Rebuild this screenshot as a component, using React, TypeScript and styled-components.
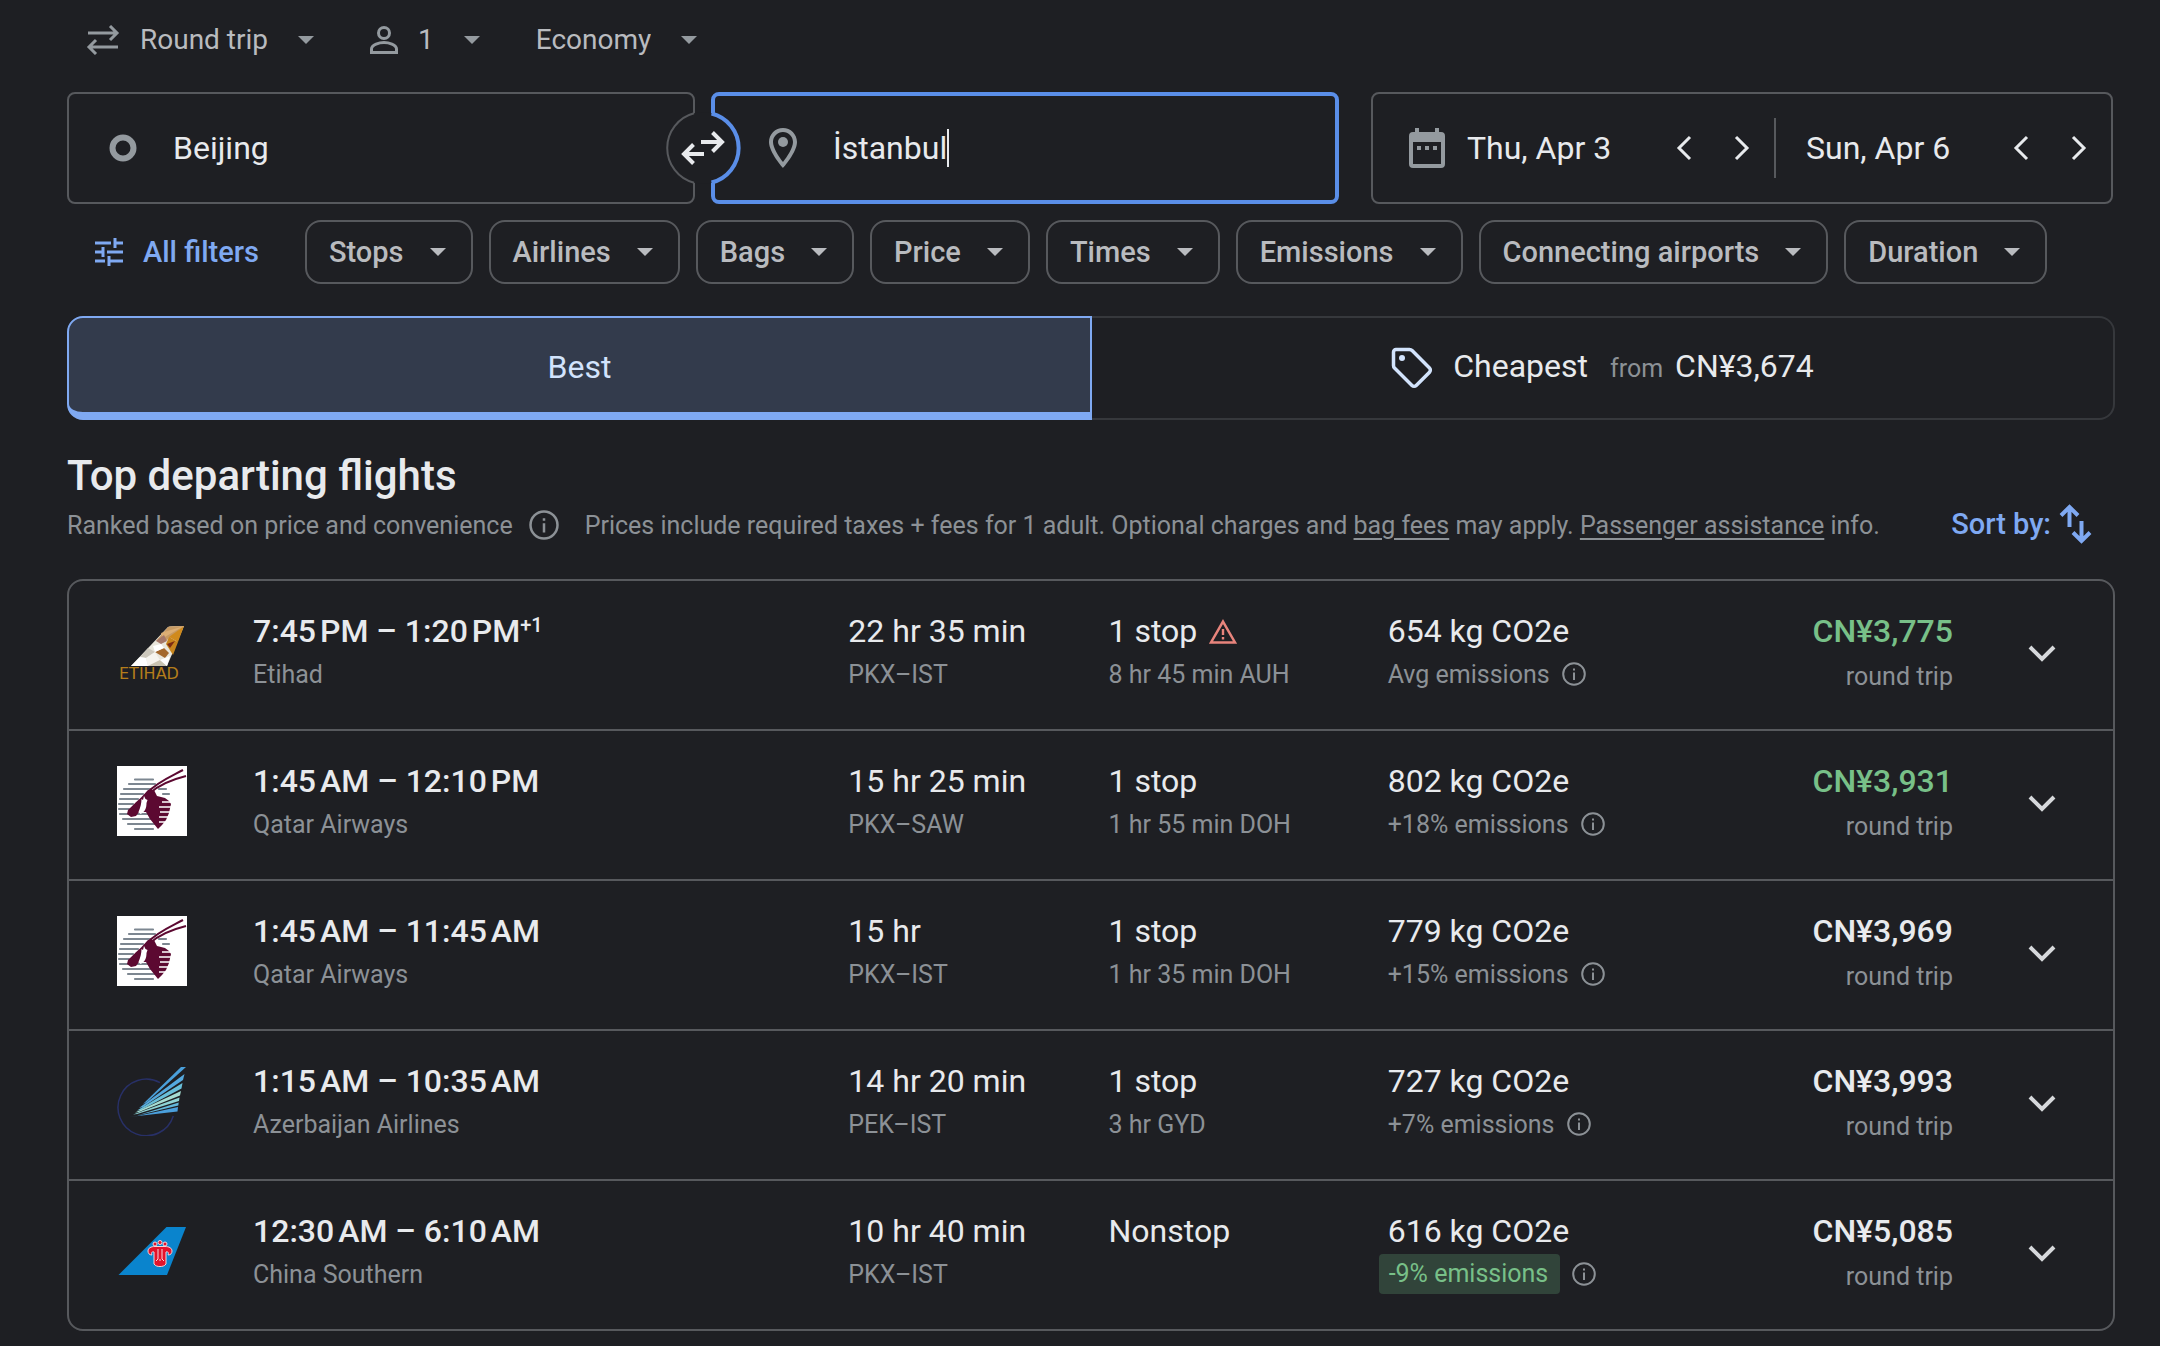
import React from "react";
import styled, { createGlobalStyle } from "styled-components";

const c = {
  bg: "#1e1f23",
  text: "#e8eaed",
  soft: "#b9bbbf",
  muted: "#8c9196",
  icon: "#949a9f",
  line: "#57595d",
  faint: "#36383c",
  blue: "#7fa9f2",
  focus: "#5a8ee8",
  green: "#78c088",
  red: "#e8847c",
};

const GlobalStyle = createGlobalStyle`
  *, *::before, *::after { box-sizing: border-box; }
  html { background: ${c.bg}; }
  body { margin: 0; color: ${c.text}; font-family: Roboto, "Liberation Sans", sans-serif; font-size: 24px; }
  button, input, select { font: inherit; color: inherit; background: none; border: 0; padding: 0; margin: 0; outline: none; }
  button { cursor: pointer; }
  h1, ul, p { margin: 0; padding: 0; }
  ul { list-style: none; }
  svg { display: block; flex: none; }
`;

const Page = styled.main`
  padding: 0 45px 16px 67px;
`;

/* ---------- trip options ---------- */

const Options = styled.div`
  display: flex;
  align-items: center;
  height: 80px;
  padding-left: 19px;
  margin-bottom: 12px;
  gap: 56px;
  font-size: 28px;
  color: ${c.soft};
`;

const Option = styled.label`
  display: flex;
  align-items: center;
  gap: 20px;
  color: ${c.icon};
`;

const Select = styled.select`
  appearance: none;
  field-sizing: content;
  color: ${c.soft};
  padding: 0 10px 2px 0;
`;

const CaretDown = ({ color = c.soft }: { color?: string }) => (
  <svg width="16" height="8" viewBox="0 0 16 8" aria-hidden="true">
    <path d="M0 0h16L8 8z" fill={color} />
  </svg>
);

/* ---------- search fields ---------- */

const Search = styled.form`
  display: grid;
  grid-template-columns: minmax(0, 1272fr) minmax(0, 742fr);
  gap: 32px;
  margin-right: 2px;
`;

const Places = styled.div`
  position: relative;
  display: grid;
  grid-template-columns: 1fr 1fr;
  gap: 16px;
`;

const Field = styled.label<{ $focused?: boolean }>`
  display: flex;
  align-items: center;
  height: 112px;
  padding-left: ${(p) => (p.$focused ? 54 : 40)}px;
  gap: 36px;
  border: ${(p) => (p.$focused ? `4px solid ${c.focus}` : `2px solid ${c.line}`)};
  border-radius: 8px;
  font-size: 32px;
`;

const PlaceInput = styled.input`
  field-sizing: content;
  height: 48px;
  caret-color: transparent;
`;

const Typed = styled.span`
  display: flex;
  align-items: center;
`;

const TextCursor = styled.span`
  width: 2px;
  height: 38px;
  background: ${c.text};
`;

const Swap = styled.button`
  position: absolute;
  left: 50%;
  top: 50%;
  transform: translate(-50%, -50%);
`;

const Dates = styled.div`
  display: grid;
  grid-template-columns: minmax(0, 401fr) minmax(0, 337fr);
  align-items: center;
  border: 2px solid ${c.line};
  border-radius: 8px;
  font-size: 32px;
`;

const DateCell = styled.div<{ $divided?: boolean }>`
  display: flex;
  align-items: center;
  height: 60px;
  padding: 0 12px 0 ${(p) => (p.$divided ? 30 : 36)}px;
  border-left: ${(p) => (p.$divided ? `2px solid ${c.line}` : "0")};
`;

const DateLabel = styled.label`
  display: flex;
  flex: 1;
  min-width: 0;
  align-items: center;
  gap: 22px;
`;

const DateInput = styled.input`
  flex: 1;
  width: 100%;
  min-width: 0;
`;

const Step = styled.button`
  display: grid;
  place-items: center;
  width: 40px;
  height: 48px;
  & + & {
    margin-left: 18px;
  }
`;

/* ---------- filters ---------- */

const Filters = styled.div`
  display: flex;
  gap: 16px;
  margin-top: 16px;
  font-size: 29px;
  font-weight: 500;
  white-space: nowrap;
`;

const AllFilters = styled.button`
  display: flex;
  align-items: center;
  gap: 20px;
  padding: 0 30px 0 28px;
  color: ${c.blue};
`;

const Chip = styled.button`
  display: flex;
  align-items: center;
  gap: 26px;
  height: 64px;
  padding: 0 25px 0 22px;
  border: 2px solid ${c.line};
  border-radius: 16px;
  color: ${c.soft};
`;

/* ---------- tabs ---------- */

const Tabs = styled.div`
  display: grid;
  grid-template-columns: 1025fr 1023fr;
  margin-top: 32px;
`;

const Tab = styled.button<{ $active?: boolean }>`
  display: flex;
  align-items: center;
  justify-content: center;
  gap: 20px;
  height: 104px;
  font-size: 32px;
  border: 2px solid ${(p) => (p.$active ? c.blue : c.faint)};
  ${(p) =>
    p.$active
      ? `border-bottom-width: 8px; padding-top: 4px; border-radius: 16px 0 0 16px; background: #333b4c; color: #d2e3fc;`
      : `border-left: 0; border-radius: 0 16px 16px 0;`}
`;

const TabText = styled.span`
  padding-bottom: 4px;
`;

const From = styled.span`
  margin: 0 12px 0 22px;
  font-size: 25px;
  color: ${c.muted};
`;

/* ---------- heading ---------- */

const Heading = styled.h1`
  margin-top: 32px;
  font-size: 42px;
  line-height: 48px;
  font-weight: 500;
`;

const Meta = styled.div`
  display: flex;
  align-items: center;
  height: 50px;
  color: ${c.muted};
  font-size: 25px;
  white-space: nowrap;
`;

const InfoButton = styled.button<{ $left: number; $right?: number }>`
  margin-left: ${(p) => p.$left}px;
  margin-right: ${(p) => p.$right ?? 0}px;
  color: ${c.muted};
`;

const Link = styled.a`
  color: inherit;
  text-decoration: underline;
  text-underline-offset: 4px;
`;

const SortBy = styled.button`
  display: flex;
  align-items: center;
  gap: 8px;
  margin-left: auto;
  padding: 0 22px 2px 0;
  font-size: 29px;
  font-weight: 500;
  color: ${c.blue};
`;

/* ---------- results ---------- */

const Flights = styled.ul`
  margin-top: 29px;
  border: 2px solid ${c.line};
  border-radius: 16px;
`;

const Flight = styled.li`
  display: grid;
  grid-template-columns: 136px 595fr 260fr 279fr 300fr 265fr 160px;
  height: 150px;
  padding-left: 48px;
  & + & {
    border-top: 2px solid ${c.line};
  }
  &:first-child {
    height: 148px;
  }
`;

const Logo = styled.div`
  padding-top: 35px;
`;

const Cell = styled.div<{ $end?: boolean }>`
  padding-top: 30px;
  text-align: ${(p) => (p.$end ? "right" : "left")};
  white-space: nowrap;
`;

const Main = styled.p<{ $strong?: boolean; $color?: string }>`
  display: flex;
  align-items: center;
  font-size: 32px;
  line-height: 40px;
  font-weight: ${(p) => (p.$strong ? 500 : 400)};
  color: ${(p) => p.$color ?? c.text};
`;

const Price = styled(Main)`
  display: block;
`;

const NextDay = styled.sup`
  align-self: flex-start;
  font-size: 20px;
  line-height: 28px;
`;

const Sub = styled.p`
  display: flex;
  align-items: center;
  height: 40px;
  margin-top: 3px;
  font-size: 25px;
  color: ${c.muted};
`;

const PriceSub = styled(Sub)`
  justify-content: flex-end;
  margin-top: 5px;
`;

const Badge = styled.span`
  margin-left: -9px;
  padding: 0 12px 0 10px;
  line-height: 40px;
  border-radius: 4px;
  background: #31443a;
  color: ${c.green};
`;

const Warn = styled.span`
  margin-left: 12px;
`;

const Expand = styled.button`
  display: grid;
  place-items: center;
  align-self: center;
  justify-self: center;
  width: 56px;
  height: 56px;
  padding-bottom: 4px;
  margin-left: 18px;
`;

/* ---------- icons ---------- */

const RoundTripIcon = () => (
  <svg width="34" height="30" viewBox="0 0 34 30" fill="none" stroke={c.icon} strokeWidth="3" aria-hidden="true">
    <path d="M2 8h29M24 1l7 7-7 7M32 22H3M10 15l-7 7 7 7" />
  </svg>
);

const PersonIcon = () => (
  <svg width="28" height="28" viewBox="0 0 28 28" fill="none" stroke={c.icon} strokeWidth="3" aria-hidden="true">
    <circle cx="14" cy="7" r="5.5" />
    <path d="M1.500 26.500v-3.500c0-4.500 8-6.500 12.500-6.500s12.500 2 12.500 6.500v3.500z" />
  </svg>
);

const SwapArt = () => (
  <svg width="76" height="76" viewBox="0 0 76 76" fill="none" aria-hidden="true">
    <circle cx="38" cy="38" r="36" fill={c.bg} />
    <path d="M29 3.200A36 36 0 0 0 29 72.800" stroke={c.line} strokeWidth="2" />
    <path d="M46.500 3.500A35.500 35.500 0 0 1 46.500 72.500" stroke={c.focus} strokeWidth="4" />
    <path d="M36 32h20M47.500 22.500l9.500 9.500-9.500 9.500M39 44H19M28.500 34.500L19 44l9.500 9.500" stroke={c.text} strokeWidth="4" />
  </svg>
);

const OriginIcon = () => (
  <svg width="28" height="28" viewBox="0 0 28 28" aria-hidden="true">
    <circle cx="14" cy="14" r="10.500" fill="none" stroke={c.icon} strokeWidth="6" />
  </svg>
);

const PinIcon = () => (
  <svg width="28" height="40" viewBox="0 0 28 40" aria-hidden="true">
    <path
      fill={c.icon}
      fillRule="evenodd"
      d="M14 0C6.300 0 0 6.200 0 14c0 10.500 14 26 14 26s14-15.500 14-26C28 6.200 21.700 0 14 0zM4 14C4 8.500 8.500 4 14 4s10 4.500 10 10c0 5.800-5.800 14.700-10 20C9.900 28.800 4 19.700 4 14z"
    />
    <circle cx="14" cy="14" r="5" fill={c.icon} />
  </svg>
);

const CalendarIcon = () => (
  <svg width="36" height="40" viewBox="0 0 36 40" fill={c.icon} aria-hidden="true">
    <path
      fillRule="evenodd"
      d="M6 0h4v4h16V0h4v4h2a4 4 0 0 1 4 4v28a4 4 0 0 1-4 4H4a4 4 0 0 1-4-4V8a4 4 0 0 1 4-4h2zM4 14v22h28V14z"
    />
    <path d="M8 18h4v4H8zM16 18h4v4h-4zM24 18h4v4h-4z" />
  </svg>
);

const ChevronIcon = ({ back }: { back?: boolean }) => (
  <svg width="16" height="26" viewBox="0 0 16 26" fill="none" stroke={c.text} strokeWidth="3" aria-hidden="true">
    <path d={back ? "M14 2L3 13l11 11" : "M2 2l11 11L2 24"} />
  </svg>
);

const TuneIcon = () => (
  <svg width="28" height="28" viewBox="0 0 28 28" fill="none" stroke={c.blue} strokeWidth="3" aria-hidden="true">
    <path d="M0 5h16M20 5h8M20 0v10M0 14h8M12 14h16M8 9v10M0 23h10M14 23h14M14 18v10" />
  </svg>
);

const TagIcon = () => (
  <svg width="42" height="42" viewBox="0 0 42 42" fill="none" aria-hidden="true">
    <path
      d="M2.500 5A2.500 2.500 0 0 1 5 2.500h13.500c1 0 2 .4 2.600 1L38.500 21a3 3 0 0 1 0 4.200L25.200 38.500a3 3 0 0 1-4.200 0L3.500 21c-.6-.6-1-1.500-1-2.500z"
      stroke="#d2e3fc"
      strokeWidth="3.500"
    />
    <circle cx="11" cy="11" r="3" fill="#d2e3fc" />
  </svg>
);

const InfoIcon = ({ size }: { size: number }) => (
  <svg width={size} height={size} viewBox="0 0 24 24" aria-hidden="true">
    <circle cx="12" cy="12" r="10.800" fill="none" stroke="currentColor" strokeWidth="2" />
    <path d="M11 10.500h2V18h-2zM11 6.500h2v2h-2z" fill="currentColor" />
  </svg>
);

const SortIcon = () => (
  <svg width="34" height="40" viewBox="0 0 34 40" fill="none" stroke={c.blue} strokeWidth="4" aria-hidden="true">
    <path d="M10.500 23V4M2 11.500L10.500 3l8.500 8.500M22.500 17v19M14 28.500l8.500 8.500 8.500-8.500" />
  </svg>
);

const WarningIcon = () => (
  <svg width="28" height="25" viewBox="0 0 28 25" aria-hidden="true">
    <path d="M14 2.600L26 23.500H2z" fill="none" stroke={c.red} strokeWidth="2.500" />
    <path d="M12.800 10h2.400v6h-2.400zM12.800 18h2.400v2.400h-2.400z" fill={c.red} />
  </svg>
);

const ExpandIcon = () => (
  <svg width="28" height="18" viewBox="0 0 28 18" aria-hidden="true">
    <path d="M2 3l12 12L26 3" fill="none" stroke="#d6d8db" strokeWidth="4" />
  </svg>
);

/* ---------- airline marks ---------- */

const EtihadLogo = () => (
  <svg width="70" height="70" viewBox="0 0 70 70" role="img" aria-label="Etihad">
    <path d="M51 11q2-1 16-1L50 50H14z" fill="#e9e6dc" />
    <path d="M51 11q2-1 16-1L50 24l-11 1z" fill="#c79a63" />
    <path d="M67 10L61 26l-9-5z" fill="#d08a1c" />
    <path d="M67 10L46 22l-2-5z" fill="#dcae74" />
    <path d="M39 25l8-6 3 6-6 3z" fill="#a5786a" />
    <path d="M61 26l-5 13-7-11 3-7z" fill="#c8851d" />
    <path d="M50 28l8-3-5 7z" fill="#7c2c14" />
    <path d="M38 36l9-4 5 5-4 5z" fill="#a4682d" />
    <path d="M36 30l8-2 3 4-9 4z" fill="#fff" />
    <path d="M31 32l7 4-9 6-6-1z" fill="#cdc8bc" />
    <path d="M14 50l9-9 6 1 2 8z" fill="#fff" />
    <path d="M29 42l9-6 5 8-12 6z" fill="#f6f4ee" />
    <path d="M43 44l7 6H31z" fill="#c9c4b2" />
    <path d="M48 42l5-2-3 10-7-6z" fill="#fff" />
    <text x="2" y="63" fontFamily="'DejaVu Sans', sans-serif" fontSize="16" fill="#b47d1b">
      ETIHAD
    </text>
  </svg>
);

const QatarLogo = () => (
  <svg width="70" height="70" viewBox="0 0 70 70" role="img" aria-label="Qatar Airways">
    <path fill="#fff" d="M0 0h70v70H0z" />
    <path
      d="M18 13.500h18M12 18h26M7 23h26M4 28h22M3 33h18M2 38h14M2 43h10M3 48h36M6 53h30M11 58h28M18 63h18M42 23h7M46 28h6"
      stroke="#7d8791"
      strokeWidth="2.200"
      strokeLinecap="round"
    />
    <path
      d="M31 24C26 30 17 38 11 44l-1 4 4 3 5-1 3-4 7 0 4 7 8 10 4-4 4-5 3-7 2-9-2-3-4-3-8-2-3-6z"
      fill="#5c0931"
    />
    <path d="M27 30l-1 4-1.500-1c0 4-1 8-3 13l2 2c4-2 6-5 6-11l1-3-2-1z" fill="#fff" />
    <path d="M30 27C40 16 55 10 66 4M33 27C42 19 57 13 69 10" stroke="#5c0931" strokeWidth="2" fill="none" />
    <path d="M45 36h10M42 41h12M43 46h11M42 51h10M42 56h7" stroke="#fff" strokeWidth="1.600" />
  </svg>
);

const AzalLogo = () => (
  <svg width="70" height="70" viewBox="0 0 70 70" role="img" aria-label="Azerbaijan Airlines">
    <path d="M43 16.700A28.300 28.300 0 1 0 56.300 50" fill="none" stroke="#283067" strokeWidth="1.500" />
    <path d="M64 1h5L30 36l-4 2z" fill="#4aa0db" />
    <path d="M67.500 8l-1.500 6L26 41l-4 1z" fill="#55a9de" />
    <path d="M65.500 17l-1 5.500L24 44l-4 .5z" fill="#69bfd9" />
    <path d="M64 25l-1 4.500L22 46l-4 .5z" fill="#a5dcd2" />
    <path d="M62.500 31.500l-.5 3.500L20 48l-4 .5z" fill="#8ed3d4" />
    <path d="M61.700 36.500l-.4 3L20 49.500z" fill="#62b7da" />
    <path d="M61 41l-.5 4.500L12 51l8-1z" fill="#4a9fdc" />
  </svg>
);

const SouthernLogo = () => (
  <svg width="70" height="70" viewBox="0 0 70 70" role="img" aria-label="China Southern">
    <path d="M49.500 11H69L50 59H1.500z" fill="#0a84cd" />
    <g stroke="#f3d6dc" strokeWidth="1" fill="#e3132b">
      <circle cx="38" cy="28" r="2" />
      <circle cx="43" cy="26.500" r="2" />
      <circle cx="48" cy="28" r="2" />
      <path d="M37 48c1.500 2 3.500 2.500 6 2.500s4.500-.5 6-2.500V36c2-1 3 1 2 3 3 0 4-2 4-4 0-3-3-4.500-7-4.500H38c-4 0-7 1.500-7 4.500 0 2 1 4 4 4-1-2 0-4 2-3z" />
      <path d="M41 33v10l-2 2M45 33v10l2 2M43 43v2" fill="none" />
    </g>
  </svg>
);

/* ---------- data ---------- */

const filters = ["Stops", "Airlines", "Bags", "Price", "Times", "Emissions", "Connecting airports", "Duration"];

type FlightData = {
  logo: React.ReactNode;
  times: string;
  nextDay?: boolean;
  airline: string;
  duration: string;
  route: string;
  stops: string;
  layover?: string;
  warning?: boolean;
  co2: string;
  emissions: string;
  low?: boolean;
  price: string;
  deal?: boolean;
};

const flights: FlightData[] = [
  {
    logo: <EtihadLogo />,
    times: "7:45\u202fPM – 1:20\u202fPM",
    nextDay: true,
    airline: "Etihad",
    duration: "22 hr 35 min",
    route: "PKX–IST",
    stops: "1 stop",
    layover: "8 hr 45 min AUH",
    warning: true,
    co2: "654 kg CO2e",
    emissions: "Avg emissions",
    price: "CN¥3,775",
    deal: true,
  },
  {
    logo: <QatarLogo />,
    times: "1:45\u202fAM – 12:10\u202fPM",
    airline: "Qatar Airways",
    duration: "15 hr 25 min",
    route: "PKX–SAW",
    stops: "1 stop",
    layover: "1 hr 55 min DOH",
    co2: "802 kg CO2e",
    emissions: "+18% emissions",
    price: "CN¥3,931",
    deal: true,
  },
  {
    logo: <QatarLogo />,
    times: "1:45\u202fAM – 11:45\u202fAM",
    airline: "Qatar Airways",
    duration: "15 hr",
    route: "PKX–IST",
    stops: "1 stop",
    layover: "1 hr 35 min DOH",
    co2: "779 kg CO2e",
    emissions: "+15% emissions",
    price: "CN¥3,969",
  },
  {
    logo: <AzalLogo />,
    times: "1:15\u202fAM – 10:35\u202fAM",
    airline: "Azerbaijan Airlines",
    duration: "14 hr 20 min",
    route: "PEK–IST",
    stops: "1 stop",
    layover: "3 hr GYD",
    co2: "727 kg CO2e",
    emissions: "+7% emissions",
    price: "CN¥3,993",
  },
  {
    logo: <SouthernLogo />,
    times: "12:30\u202fAM – 6:10\u202fAM",
    airline: "China Southern",
    duration: "10 hr 40 min",
    route: "PKX–IST",
    stops: "Nonstop",
    co2: "616 kg CO2e",
    emissions: "-9% emissions",
    low: true,
    price: "CN¥5,085",
  },
];

const FlightRow = ({ f }: { f: FlightData }) => (
  <Flight>
    <Logo>{f.logo}</Logo>
    <Cell>
      <Main $strong>
        {f.times}
        {f.nextDay && <NextDay>+1</NextDay>}
      </Main>
      <Sub>{f.airline}</Sub>
    </Cell>
    <Cell>
      <Main>{f.duration}</Main>
      <Sub>{f.route}</Sub>
    </Cell>
    <Cell>
      <Main>
        {f.stops}
        {f.warning && (
          <Warn>
            <WarningIcon />
          </Warn>
        )}
      </Main>
      {f.layover && <Sub>{f.layover}</Sub>}
    </Cell>
    <Cell>
      <Main>{f.co2}</Main>
      <Sub>
        {f.low ? <Badge>{f.emissions}</Badge> : f.emissions}
        <InfoButton type="button" $left={12} aria-label="Emissions details">
          <InfoIcon size={24} />
        </InfoButton>
      </Sub>
    </Cell>
    <Cell $end>
      <Price $strong $color={f.deal ? c.green : c.text}>
        {f.price}
      </Price>
      <PriceSub>round trip</PriceSub>
    </Cell>
    <Expand type="button" aria-label="Flight details">
      <ExpandIcon />
    </Expand>
  </Flight>
);

export default function App() {
  return (
    <>
      <GlobalStyle />
      <Page>
        <Options>
          <Option>
            <RoundTripIcon />
            <Select aria-label="Trip type" defaultValue="Round trip">
              <option>Round trip</option>
            </Select>
            <CaretDown color={c.icon} />
          </Option>
          <Option>
            <PersonIcon />
            <Select aria-label="Passengers" defaultValue="1">
              <option>1</option>
            </Select>
            <CaretDown color={c.icon} />
          </Option>
          <Option>
            <Select aria-label="Cabin" defaultValue="Economy">
              <option>Economy</option>
            </Select>
            <CaretDown color={c.icon} />
          </Option>
        </Options>

        <Search onSubmit={(e) => e.preventDefault()}>
          <Places>
            <Field>
              <OriginIcon />
              <PlaceInput aria-label="Where from?" defaultValue="Beijing" />
            </Field>
            <Field $focused>
              <PinIcon />
              <Typed>
                <PlaceInput aria-label="Where to?" defaultValue="İstanbul" />
                <TextCursor />
              </Typed>
            </Field>
            <Swap type="button" aria-label="Swap origin and destination">
              <SwapArt />
            </Swap>
          </Places>
          <Dates>
            <DateCell>
              <DateLabel>
                <CalendarIcon />
                <DateInput aria-label="Departure" defaultValue="Thu, Apr 3" />
              </DateLabel>
              <Step type="button" aria-label="Earlier departure">
                <ChevronIcon back />
              </Step>
              <Step type="button" aria-label="Later departure">
                <ChevronIcon />
              </Step>
            </DateCell>
            <DateCell $divided>
              <DateLabel>
                <DateInput aria-label="Return" defaultValue="Sun, Apr 6" />
              </DateLabel>
              <Step type="button" aria-label="Earlier return">
                <ChevronIcon back />
              </Step>
              <Step type="button" aria-label="Later return">
                <ChevronIcon />
              </Step>
            </DateCell>
          </Dates>
        </Search>

        <Filters>
          <AllFilters type="button">
            <TuneIcon />
            All filters
          </AllFilters>
          {filters.map((f) => (
            <Chip key={f} type="button" aria-haspopup="dialog">
              {f}
              <CaretDown />
            </Chip>
          ))}
        </Filters>

        <Tabs role="tablist">
          <Tab $active role="tab" aria-selected="true">
            Best
          </Tab>
          <Tab role="tab" aria-selected="false">
            <TagIcon />
            <TabText>
              Cheapest<From>from</From>CN¥3,674
            </TabText>
          </Tab>
        </Tabs>

        <Heading>Top departing flights</Heading>
        <Meta>
          Ranked based on price and convenience
          <InfoButton type="button" $left={16} $right={26} aria-label="About ranking">
            <InfoIcon size={30} />
          </InfoButton>
          <p>
            Prices include required taxes + fees for 1 adult. Optional charges and <Link href="#bag-fees">bag fees</Link>{" "}
            may apply. <Link href="#assistance">Passenger assistance</Link> info.
          </p>
          <SortBy type="button">
            Sort by:
            <SortIcon />
          </SortBy>
        </Meta>

        <Flights>
          {flights.map((f, i) => (
            <FlightRow key={i} f={f} />
          ))}
        </Flights>
      </Page>
    </>
  );
}
